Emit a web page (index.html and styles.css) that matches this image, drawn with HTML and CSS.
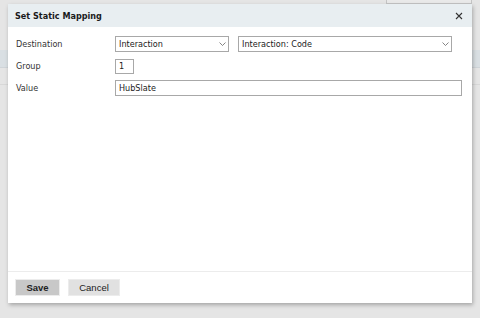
FILE: index.html
```html
<!DOCTYPE html>
<html lang="en">
<head>
  <meta charset="UTF-8">
  <meta name="viewport" content="width=device-width, initial-scale=1.0">
  <title>Set Static Mapping</title>
  <link rel="stylesheet" href="styles.css">
</head>
<body>
  <div class="page">
    <div class="topbar">
      <div class="search">Search...</div>
    </div>
    <div class="grid-head"></div>
    <div class="grid-row"></div>
  </div>

  <div class="modal">
    <div class="modal-header">
      <h1>Set Static Mapping</h1>
      <button type="button" class="close" aria-label="Close">
        <svg width="8" height="8" viewBox="0 0 8 8"><path d="M1 1L7 7M7 1L1 7" stroke="#333" stroke-width="1.1" fill="none"/></svg>
      </button>
    </div>
    <form class="modal-body">
      <div class="field">
        <label for="dest">Destination</label>
        <span class="select-wrap select-short">
          <select id="dest"><option>Interaction</option></select>
          <svg class="chevron" width="7" height="4" viewBox="0 0 7 4"><path d="M0.5 0.5L3.5 3.5L6.5 0.5" stroke="#666" stroke-width="0.8" fill="none"/></svg>
        </span>
        <span class="select-wrap select-long">
          <select id="dest-field"><option>Interaction: Code</option></select>
          <svg class="chevron" width="7" height="4" viewBox="0 0 7 4"><path d="M0.5 0.5L3.5 3.5L6.5 0.5" stroke="#666" stroke-width="0.8" fill="none"/></svg>
        </span>
      </div>
      <div class="field">
        <label for="group">Group</label>
        <input type="text" id="group" class="input-group" value="1">
      </div>
      <div class="field">
        <label for="value">Value</label>
        <input type="text" id="value" class="input-value" value="HubSlate">
      </div>
    </form>
    <div class="modal-footer">
      <button type="button" class="btn btn-save">Save</button>
      <button type="button" class="btn btn-cancel">Cancel</button>
    </div>
  </div>
</body>
</html>
```

FILE: styles.css
```css
body {
  margin: 0;
  background-color: #e5e5e5;
  font-family: "DejaVu Sans Condensed", "DejaVu Sans", sans-serif;
  font-stretch: condensed;
  font-size: 9px;
  color: #222;
  height: 318px;
  overflow: hidden;
}
.page {
  height: 100%;
}
.topbar {
  height: 4px;
  overflow: hidden;
  display: flex;
  justify-content: flex-end;
  align-items: flex-end;
  padding-right: 8px;
}
.search {
  flex: none;
  width: 86px;
  height: 14px;
  box-sizing: border-box;
  border: 1px solid #c4c4c4;
  background: #e9e9e9;
  padding: 0 4px;
  line-height: 10px;
  color: #8a8a8a;
}
.grid-head {
  margin-top: 46px;
  height: 17px;
  background-color: #d9dfe3;
  border-bottom: 1px solid #cfd4d8;
}
.grid-row {
  height: 16px;
  border-bottom: 1px solid #d8d8d8;
}

.modal {
  position: absolute;
  left: 8px;
  top: 4px;
  width: 464px;
  height: 299px;
  background: white;
  box-shadow: 1px 2px 4px rgba(0, 0, 0, 0.28);
  display: flex;
  flex-direction: column;
}
.modal-header {
  height: 23px;
  background-color: #e8eef1;
  display: flex;
  align-items: center;
  justify-content: space-between;
  padding: 0 9px 0 7px;
}
.modal-header h1 {
  margin: 0;
  font-size: 9px;
  font-weight: bold;
  color: #1a1a1a;
}
.close {
  border: none;
  background: none;
  padding: 0;
  width: 8px;
  height: 8px;
  display: flex;
  cursor: pointer;
}
.modal-body {
  flex: 1;
  margin: 0;
  padding: 9px 8px 0 8px;
  display: flex;
  flex-direction: column;
  gap: 6px;
}
.field {
  display: flex;
  align-items: center;
  min-height: 16px;
}
.field label {
  width: 99px;
  flex: none;
  color: #333;
}
.select-wrap {
  position: relative;
  display: flex;
}
.select-short {
  width: 114px;
  margin-right: 9px;
}
.select-long {
  width: 214px;
}
.select-wrap select {
  appearance: none;
  -webkit-appearance: none;
  width: 100%;
  height: 16px;
  border: 1px solid #a8a8a8;
  border-radius: 0;
  background: white;
  font: inherit;
  color: #222;
  padding: 0 14px 0 3px;
  margin: 0;
}
.chevron {
  position: absolute;
  right: 3px;
  top: 6px;
}
.modal-body input {
  box-sizing: border-box;
  border: 1px solid #a8a8a8;
  border-radius: 0;
  font: inherit;
  color: #222;
  padding: 0 3px;
  margin: 0;
}
.input-group {
  width: 19px;
  height: 15px;
}
.input-value {
  width: 347px;
  height: 16px;
}
.modal-footer {
  border-top: 1px solid #ececec;
  padding: 7px;
  display: flex;
  gap: 8px;
}
.btn {
  height: 17px;
  border: 1px solid #ececec;
  font-family: "Liberation Sans", Arial, sans-serif;
  font-size: 9.5px;
  color: #222;
  padding: 0;
  cursor: pointer;
}
.btn-save {
  width: 45px;
  background-color: #c8c8c8;
  font-weight: bold;
}
.btn-cancel {
  width: 52px;
  background-color: #e1e1e1;
}
```
